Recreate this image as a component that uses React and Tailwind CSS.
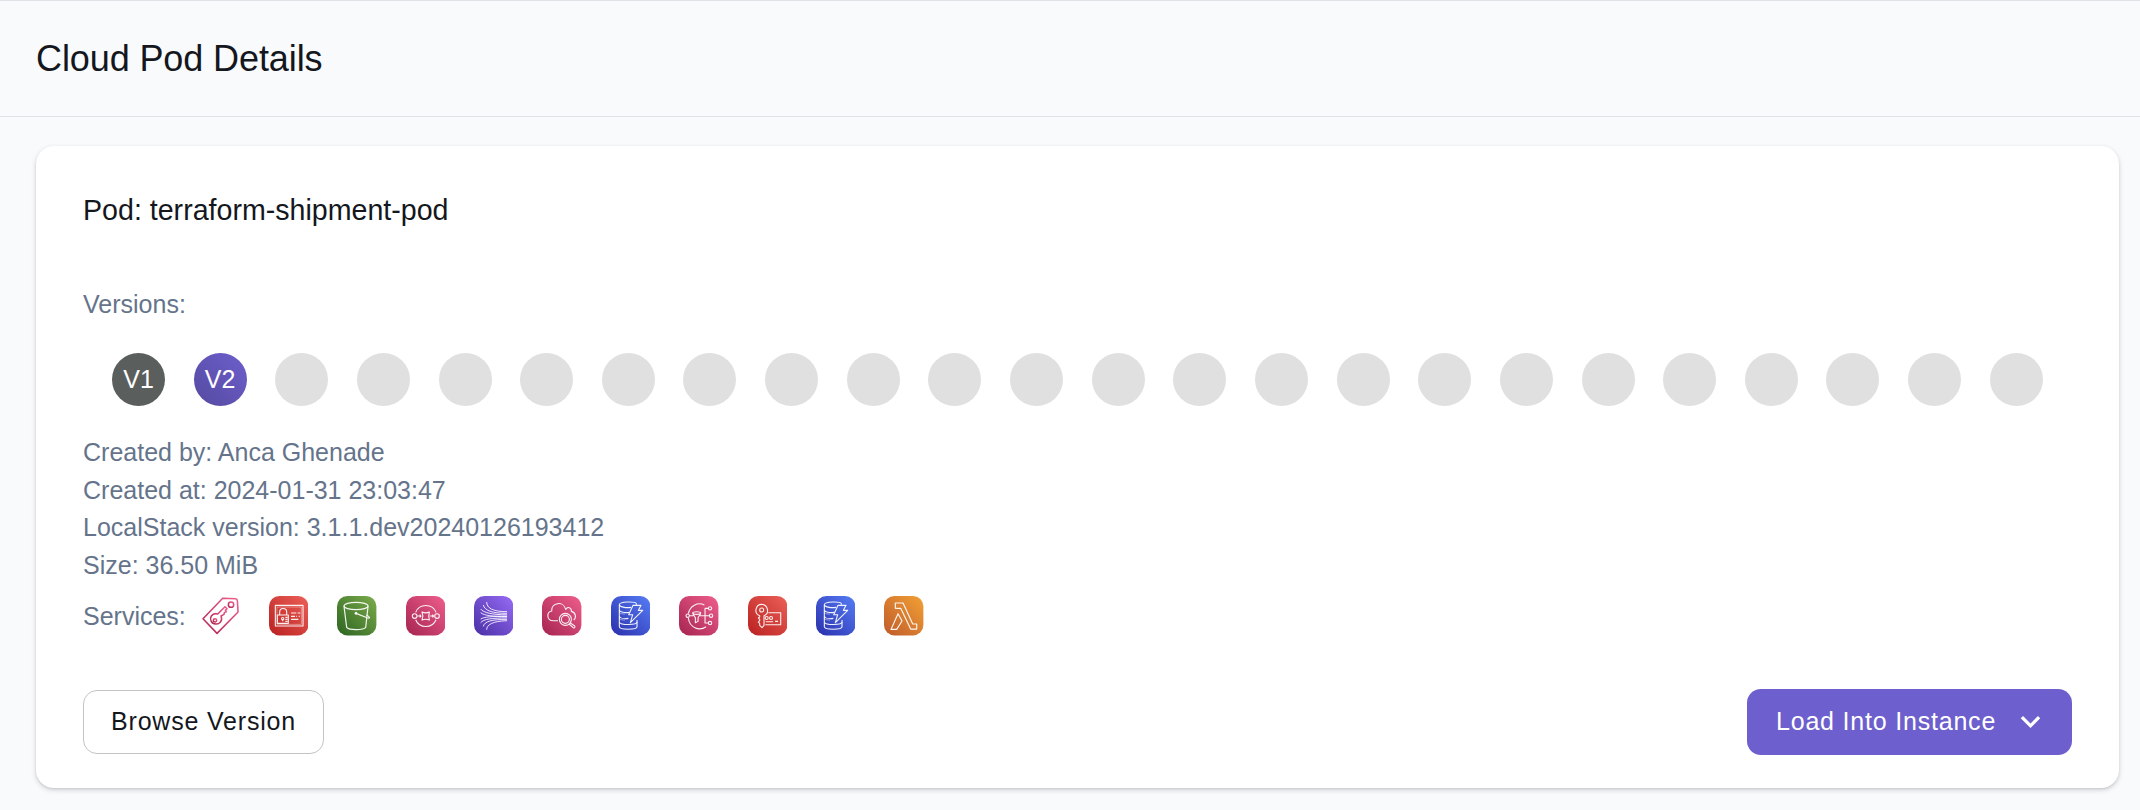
const GRADIENTS = {
  red: ["#b9201f", "#ec6058"],
  green: ["#2c6420", "#7cac4c"],
  pink: ["#a52450", "#ef5e8c"],
  purple: ["#492fa5", "#976bf5"],
  blue: ["#2a2fac", "#567df5"],
  orange: ["#bf5a2a", "#f2a136"],
};

const S = ({ children, w = 3.3 }) => (
  <g fill="none" stroke="#fff" strokeOpacity="0.92" strokeWidth={w} strokeLinejoin="round">{children}</g>
);

function Tile({ color, id, children }) {
  const [a, b] = GRADIENTS[color];
  return (
    <svg viewBox="0 0 118 118" className="size-[39.4px] shrink-0">
      <defs>
        <linearGradient id={id} x1="0" y1="1" x2="1" y2="0">
          <stop offset="0" stopColor={a} />
          <stop offset="1" stopColor={b} />
        </linearGradient>
      </defs>
      <rect width="118" height="118" rx="31" fill={`url(#${id})`} />
      {children}
    </svg>
  );
}

function TagIcon() {
  return (
    <svg viewBox="0 0 118 118" className="size-[39.4px] shrink-0">
      <defs>
        <linearGradient id="tag" x1="0" y1="1" x2="1" y2="0">
          <stop offset="0" stopColor="#b0244f" />
          <stop offset="1" stopColor="#ef5e8c" />
        </linearGradient>
      </defs>
      <g fill="none" stroke="url(#tag)" strokeWidth="4.6" strokeLinejoin="round">
        <path d="M65 7L104 8Q109 9 109 14L111 48L48 112L6 68Z" />
        <circle cx="90" cy="26" r="8" />
        <path d="M50 54L72 32L78 38L73 43L76 47L70 49L69 55L60 60C66 74 55 85 44 84C31 83 25 69 31 60C36 53 44 52 50 54Z" />
        <circle cx="42" cy="73" r="5" />
      </g>
    </svg>
  );
}

const Secrets = () => (
  <Tile color="red" id="t-secrets">
    <S>
      <rect x="19" y="28" width="83" height="62" />
      <rect x="24" y="33" width="73" height="52" strokeWidth="1.2" />
      <rect x="25" y="57" width="33" height="25" />
      <path d="M32 57V48C32 34 53 34 53 48V57" />
      <circle cx="41" cy="68" r="3.5" />
      <path d="M41 70V76M49 64H56M49 70H56M49 76H56M66 51H82M86 51H94M66 61H78M82 61H84M89 61H92M66 70H88" />
    </S>
  </Tile>
);

const Bucket = () => (
  <Tile color="green" id="t-bucket">
    <S w={3.5}>
      <ellipse cx="57" cy="30" rx="36" ry="11" />
      <path d="M21 31L29 94C35 103 79 103 86 94L93 31" />
      <path d="M57 52L90 65C101 69 99 62 88 57" />
    </S>
    <circle cx="57" cy="52" r="4" fill="#fff" />
  </Tile>
);

const Queue = () => (
  <Tile color="pink" id="t-queue">
    <S>
      <path d="M29 49A33 33 0 0 1 90 49M29 71A33 33 0 0 0 90 71" />
      <circle cx="26" cy="60" r="7" />
      <circle cx="93" cy="60" r="7" />
      <path d="M48 48Q59 53 70 48Q66 60 70 72Q59 67 48 72Q53 60 48 48Z" />
      <path d="M34 60H45M41 56L45 60L41 64M71 60H83M79 56L83 60L79 64" />
    </S>
  </Tile>
);

const Kinesis = () => (
  <Tile color="purple" id="t-kinesis">
    <S w={2.8}>
      <path d="M38 18C38 36 56 47 99 47M28 27C31 43 54 52 99 52M20 39C28 50 54 56 99 56.5M20 50C32 59 54 61 99 61M20 69C32 62 54 61 99 61M20 80C28 69 54 66 99 65.5M28 91C31 76 54 70 99 70M38 101C38 86 56 75 99 74" />
    </S>
  </Tile>
);

const CloudSearch = () => (
  <Tile color="pink" id="t-cloud">
    <S>
      <path d="M48 74H34C13 74 13 48 29 45C27 20 64 13 71 40C77 30 89 35 88 46C101 49 104 64 95 72" />
      <circle cx="70" cy="70" r="18" />
      <circle cx="70" cy="70" r="12" />
      <path d="M84 80L98 90Q100 95 95 96L81 84" />
    </S>
  </Tile>
);

const Dynamo = ({ id }) => (
  <Tile color="blue" id={id}>
    <S>
      <path d="M60 34C44 37 25 32 25 26C25 16 75 16 76 23V26" />
      <path d="M25 26V92C25 102 78 102 78 92V72" />
      <path d="M25 42C26 49 42 51 55 49M25 60C27 67 40 69 52 67M25 78C28 88 78 88 78 78" />
      <path d="M25 46V50C27 53 35 54 42 54M25 64V68C27 71 35 72 42 72" strokeWidth="1.5" />
      <path d="M66 28H90L82 43H95L58 80L65 56H53Z" />
    </S>
  </Tile>
);

const Events = () => (
  <Tile color="pink" id="t-events">
    <S>
      <path d="M28 53A34 36 0 0 1 76 27M28 66A34 36 0 0 0 81 92" />
      <circle cx="26" cy="59" r="5" />
      <circle cx="93" cy="37" r="5" />
      <circle cx="96" cy="59" r="5" />
      <circle cx="93" cy="81" r="5" />
      <ellipse cx="53" cy="51" rx="12" ry="4" />
      <path d="M41 52L49 65V80L57 76V65L65 52M31 59H43M63 59H91M88 37H78V81H88" />
    </S>
  </Tile>
);

const Keys = () => (
  <Tile color="red" id="t-keys">
    <S>
      <path d="M35 59C16 52 23 25 41 25C59 25 66 52 48 59V88L42 95L35 88V82L31 78L35 74V70L31 66L35 63Z" />
      <circle cx="41" cy="42" r="6" />
      <path d="M61 50H98V86H52" />
      <circle cx="56" cy="66" r="4.5" />
      <circle cx="69" cy="66" r="4.5" />
      <path d="M81 76H90M53 77H75" />
    </S>
  </Tile>
);

const Lambda = () => (
  <Tile color="orange" id="t-lambda">
    <S w={3.5}>
      <path d="M34 21H57L86 84H98V99H80L50 37H34Z" />
      <path d="M42 53L54 75L38 100H21Z" />
    </S>
  </Tile>
);

const dot = "flex size-[53px] shrink-0 items-center justify-center rounded-full text-[25px] text-white";

export default function App() {
  return (
    <div className="flex h-[810px] w-[2140px] flex-col overflow-hidden bg-[#f9fafc] font-['Liberation_Sans',Arial,sans-serif] text-[#14171d]">
      <header className="flex h-[117px] shrink-0 items-center border-y border-[#e0e2e8] px-9">
        <h1 className="text-[36px] leading-[44px] tracking-[-0.1px] whitespace-nowrap">Cloud Pod Details</h1>
      </header>
      <main className="pt-[29px] pr-[21px] pl-9">
        <section className="flex h-[642px] flex-col rounded-[18px] bg-white px-[47px] shadow-[0_2px_5px_rgba(60,65,75,0.22),0_1px_2px_rgba(60,65,75,0.1)]">
          <h2 className="mt-[44px] text-[28.6px] leading-[40px]">Pod: terraform-shipment-pod</h2>
          <p className="mt-[55px] text-[25px] leading-[38px] text-[#65748b]">Versions:</p>
          <div className="mt-[30px] flex justify-between px-[29px]">
            <div className={`${dot} bg-[#5a5e5d]`}>V1</div>
            <div className={`${dot} bg-linear-to-tr from-[#554aa0] to-[#6d5fcd]`}>V2</div>
            {Array.from({ length: 22 }, (_, i) => (
              <div key={i} className={`${dot} bg-[#e0e0e0]`} />
            ))}
          </div>
          <div className="mt-[28px] text-[25px] leading-[37.6px] text-[#65748b]">
            <p>Created by: Anca Ghenade</p>
            <p>Created at: 2024-01-31 23:03:47</p>
            <p>LocalStack version: 3.1.1.dev20240126193412</p>
            <p>Size: 36.50 MiB</p>
          </div>
          <div className="mt-[12px] flex items-center text-[25px] leading-[39px] text-[#65748b]">
            <span className="w-[117.5px]">Services:</span>
            <div className="flex gap-[29px]">
              <TagIcon />
              <Secrets />
              <Bucket />
              <Queue />
              <Kinesis />
              <CloudSearch />
              <Dynamo id="t-dynamo" />
              <Events />
              <Keys />
              <Dynamo id="t-streams" />
              <Lambda />
            </div>
          </div>
          <div className="mt-[53px] flex items-center justify-between text-[25px] whitespace-nowrap">
            <button className="flex h-16 w-[241px] items-center justify-center rounded-[14px] border border-[#c4c4c4] tracking-[0.8px]">
              Browse Version
            </button>
            <button className="flex h-[66px] w-[325px] items-center rounded-[14px] bg-[#6d5fcd] pl-[29px] tracking-[0.8px] text-white">
              Load Into Instance
              <svg viewBox="0 0 24 24" className="ml-[15px] size-[39px]" fill="currentColor">
                <path d="M7.41 8.59 12 13.17l4.59-4.58L18 10l-6 6-6-6 1.41-1.41z" />
              </svg>
            </button>
          </div>
        </section>
      </main>
    </div>
  );
}
